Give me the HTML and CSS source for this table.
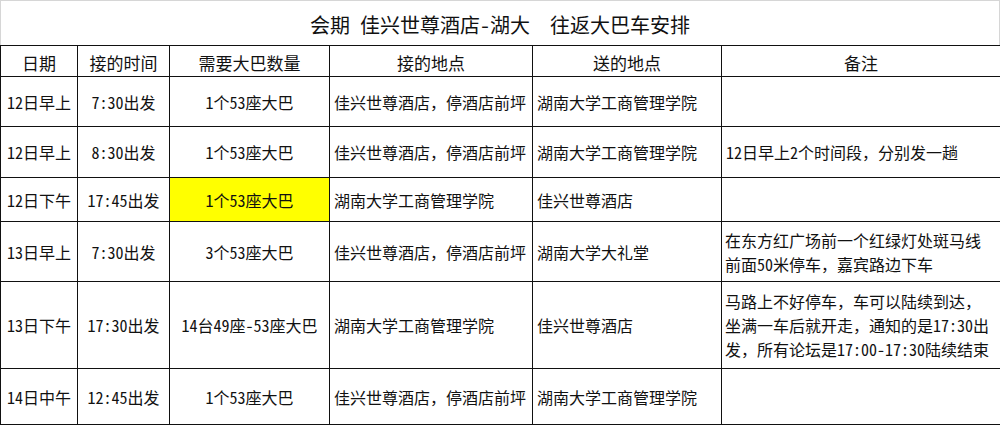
FILE: index.html
```html
<!DOCTYPE html>
<html lang="zh-CN">
<head>
<meta charset="utf-8">
<title>往返大巴车安排</title>
<link rel="stylesheet" href="styles.css">
</head>
<body>
<div class="sheet">
  <div class="title">会期 佳兴世尊酒店-湖大  往返大巴车安排</div>
  <table class="grid">
    <colgroup>
      <col class="c-date">
      <col class="c-time">
      <col class="c-qty">
      <col class="c-from">
      <col class="c-to">
      <col class="c-note">
    </colgroup>
    <thead>
      <tr class="r-head">
        <th>日期</th>
        <th>接的时间</th>
        <th>需要大巴数量</th>
        <th>接的地点</th>
        <th>送的地点</th>
        <th>备注</th>
      </tr>
    </thead>
    <tbody>
      <tr class="r1">
        <td class="ctr">12日早上</td>
        <td class="ctr">7:30出发</td>
        <td class="ctr">1个53座大巴</td>
        <td>佳兴世尊酒店<span class="fw">，</span>停酒店前坪</td>
        <td>湖南大学工商管理学院</td>
        <td></td>
      </tr>
      <tr class="r2">
        <td class="ctr">12日早上</td>
        <td class="ctr">8:30出发</td>
        <td class="ctr">1个53座大巴</td>
        <td>佳兴世尊酒店<span class="fw">，</span>停酒店前坪</td>
        <td>湖南大学工商管理学院</td>
        <td>12日早上2个时间段<span class="fw">，</span>分别发一趟</td>
      </tr>
      <tr class="r3">
        <td class="ctr">12日下午</td>
        <td class="ctr">17:45出发</td>
        <td class="ctr hl">1个53座大巴</td>
        <td>湖南大学工商管理学院</td>
        <td>佳兴世尊酒店</td>
        <td></td>
      </tr>
      <tr class="r4">
        <td class="ctr">13日早上</td>
        <td class="ctr">7:30出发</td>
        <td class="ctr">3个53座大巴</td>
        <td>佳兴世尊酒店<span class="fw">，</span>停酒店前坪</td>
        <td>湖南大学大礼堂</td>
        <td class="note">在东方红广场前一个红绿灯处斑马线<br>前面50米停车<span class="fw">，</span>嘉宾路边下车</td>
      </tr>
      <tr class="r5">
        <td class="ctr">13日下午</td>
        <td class="ctr">17:30出发</td>
        <td class="ctr">14台49座-53座大巴</td>
        <td>湖南大学工商管理学院</td>
        <td>佳兴世尊酒店</td>
        <td class="note">马路上不好停车<span class="fw">，</span>车可以陆续到达<span class="fw">，</span><br>坐满一车后就开走<span class="fw">，</span>通知的是17:30出<br>发<span class="fw">，</span>所有论坛是17:00-17:30陆续结束</td>
      </tr>
      <tr class="r6">
        <td class="ctr">14日中午</td>
        <td class="ctr">12:45出发</td>
        <td class="ctr">1个53座大巴</td>
        <td>佳兴世尊酒店<span class="fw">，</span>停酒店前坪</td>
        <td>湖南大学工商管理学院</td>
        <td></td>
      </tr>
    </tbody>
  </table>
</div>
</body>
</html>
```

FILE: styles.css
```css
html, body {
  margin: 0;
  padding: 0;
  background: #ffffff;
}

body {
  font-family: "Noto Sans CJK SC", "Noto Sans", sans-serif;
  font-feature-settings: "hwid" 1;
  color: #111111;
}

.fw {
  font-feature-settings: normal;
}

.sheet {
  width: 1000px;
}

.title {
  box-sizing: border-box;
  height: 45px;
  border: 1px solid #d6d6d6;
  border-bottom: none;
  display: flex;
  align-items: center;
  justify-content: center;
  font-size: 20px;
  white-space: pre;
  padding-top: 2px;
}

.grid {
  width: 1000px;
  table-layout: fixed;
  border-collapse: collapse;
  font-size: 16px;
  line-height: 24px;
}

.c-date { width: 77px; }
.c-time { width: 92px; }
.c-qty  { width: 160px; }
.c-from { width: 203px; }
.c-to   { width: 189px; }
.c-note { width: 279px; }

.grid th,
.grid td {
  border: 1px solid #111111;
  padding: 0 0 0 4px;
  vertical-align: middle;
  text-align: left;
  white-space: nowrap;
  overflow: hidden;
}

.grid th {
  font-weight: normal;
  font-size: 17px;
  text-align: center;
  padding: 3px 0 0 0;
}

.grid td.ctr {
  text-align: center;
  padding-left: 0;
}

.grid td.note {
  padding-left: 3px;
}

.grid td.hl {
  background: #ffff00;
}

.r-head { height: 31px; }
.r1 { height: 50px; }
.r2 { height: 51px; }
.r3 { height: 44px; }
.r4 { height: 60px; }
.r5 { height: 87px; }
.r6 { height: 56px; }
```
